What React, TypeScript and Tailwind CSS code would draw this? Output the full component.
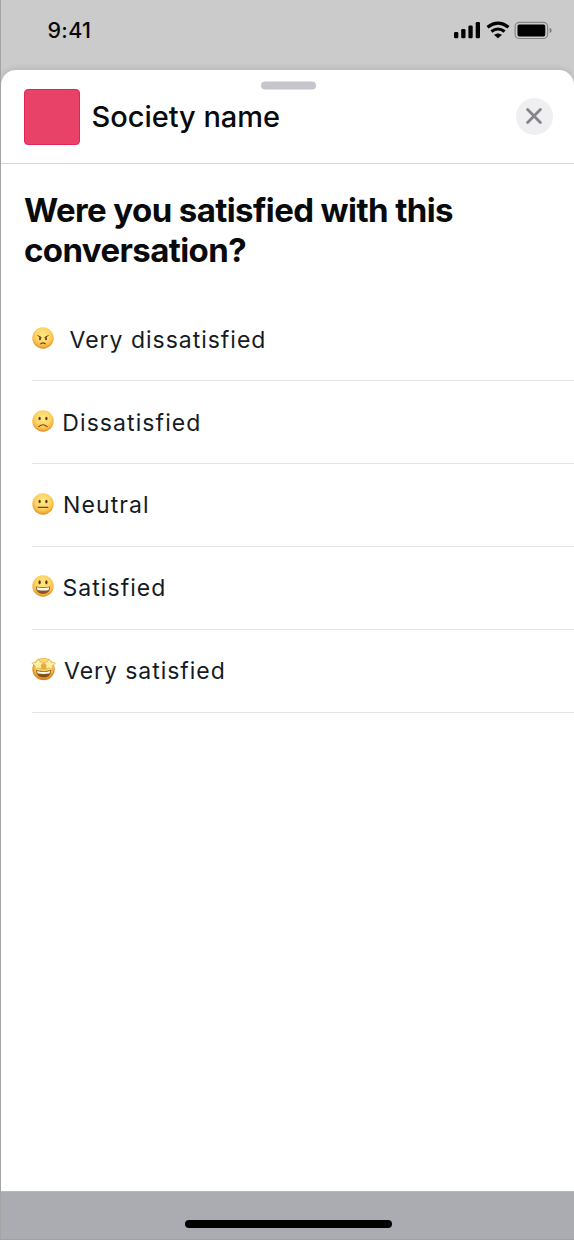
import React from "react";

type Mood = "angry" | "sad" | "neutral" | "happy" | "star";

const options: { mood: Mood; label: string; text: string }[] = [
  { mood: "angry", label: "Very dissatisfied", text: "mt-[1.6px] ml-[13.5px] tracking-[0.98px]" },
  { mood: "sad", label: "Dissatisfied", text: "mt-[1.6px] ml-[6.3px] tracking-[1.08px]" },
  { mood: "neutral", label: "Neutral", text: "ml-[7px] tracking-[1.1px]" },
  { mood: "happy", label: "Satisfied", text: "ml-[6.5px] tracking-[1.05px]" },
  { mood: "star", label: "Very satisfied", text: "ml-[8px] tracking-[0.95px]" },
];

function Face({ mood }: { mood: Mood }) {
  const fill = `url(#face-${mood})`;
  return (
    <svg viewBox="0 0 24 24" className="-mt-[3px] h-6 w-6 shrink-0 overflow-visible" aria-hidden="true">
      <defs>
        <radialGradient id={`face-${mood}`} cx="50%" cy="38%" r="62%">
          <stop offset="0" stopColor="#ffe982" />
          <stop offset="0.55" stopColor="#fdd568" />
          <stop offset="0.82" stopColor="#f6b540" />
          <stop offset="1" stopColor="#dc8720" />
        </radialGradient>
      </defs>
      <circle cx="11" cy="12" r="10.7" fill={fill} />
      {mood === "angry" && (
        <g fill="none" stroke="#6b3f1a" strokeLinecap="round">
          <path d="M5.8 9.6 9.2 11.4M16.2 9.6 12.8 11.4" strokeWidth="1" />
          <path d="M8 11.9v1.4M14 11.9v1.4" strokeWidth="1.9" />
          <path d="M8.8 17.8q2.2-1.8 4.4 0" strokeWidth="1.1" />
        </g>
      )}
      {(mood === "sad" || mood === "neutral" || mood === "happy") && (
        <g fill="#5f3515">
          <ellipse cx="7.6" cy={mood === "happy" ? 8.3 : 9.5} rx="1.15" ry={mood === "happy" ? 2.1 : 1.8} />
          <ellipse cx="14.4" cy={mood === "happy" ? 8.3 : 9.5} rx="1.15" ry={mood === "happy" ? 2.1 : 1.8} />
        </g>
      )}
      {mood === "sad" && (
        <path d="M6.8 17.6q4.2-3.8 8.4 0" fill="none" stroke="#75431a" strokeWidth="1.1" strokeLinecap="round" />
      )}
      {mood === "neutral" && (
        <path d="M6.2 15.3h9.6" stroke="#75431a" strokeWidth="1.2" strokeLinecap="round" />
      )}
      {mood === "happy" && (
        <>
          <path d="M3.8 12.5q7.2 1.5 14.4 0 -.2 7.4-7.2 7.4t-7.2-7.4z" fill="#8b5420" />
          <path d="M4.7 13.3q6.3 1.2 12.6 0 -.2 2.4-1.2 2.9 -5.1.8-10.2 0 -1-.6-1.2-2.9z" fill="#fffdf4" />
        </>
      )}
      {mood === "star" && (
        <>
          <circle cx="11.7" cy="12.2" r="11" fill="#d48a2a" />
          <circle cx="11.7" cy="11.6" r="10.3" fill="url(#face-star)" />
          <path d="M8.2 12.5 9.8 6.5h3.8l1.6 6z" fill="#e9a93a" />
          <g fill="#ffefa2" stroke="#dda23c" strokeWidth="0.6" strokeLinejoin="round">
            <path d="M6.4 1.7 8 4.9l3.4.6-2.3 2.9.7 3.6-3.5-1.2-3.2 1.8.1-3.7L-.2 6.1l4.2-.8z" />
            <path d="M17 1.7 15.4 4.9l-3.4.6 2.3 2.9-.7 3.6 3.5-1.2 3.2 1.8-.1-3.7 3.4-2.8-4.2-.8z" />
          </g>
          <path d="M4.1 13q7.6 2.2 15.2 0 -.3 7.4-7.6 7.4t-7.6-7.4z" fill="#84501c" />
          <path d="M5 13.9q6.7 1.8 13.4 0 -.3 2-1.3 2.7 -5.4.9-10.8 0 -1-.7-1.3-2.7z" fill="#fffdf0" />
        </>
      )}
    </svg>
  );
}

function StatusIcons() {
  return (
    <svg viewBox="0 0 100 20" className="h-5 w-[100px]" aria-hidden="true">
      <rect x="1" y="12" width="4.3" height="6.3" rx="1.2" />
      <rect x="8.2" y="9" width="4.3" height="9.3" rx="1.2" />
      <rect x="15.4" y="5.5" width="4.3" height="12.8" rx="1.2" />
      <rect x="22.7" y="2" width="4.3" height="16.3" rx="1.2" />
      <g fill="none" stroke="#000">
        <path d="M34.5 7.2q10.5-8 21 0" strokeWidth="3.2" />
        <path d="M38.4 11.5q6.6-5 13.2 0" strokeWidth="3.1" />
      </g>
      <path d="M45 18.1 41.5 14.9q3.5-2.4 7 0z" stroke="#000" strokeWidth=".6" strokeLinejoin="round" />
      <rect x="62.1" y="2.3" width="32.5" height="16.2" rx="4.3" fill="none" stroke="#868686" strokeWidth="1.2" />
      <rect x="64.5" y="4.4" width="27.8" height="12" rx="1.7" />
      <path d="M96.6 7.7q2 .9 2 2.7t-2 2.7z" fill="#777" />
    </svg>
  );
}

export default function App() {
  return (
    <main className="flex h-[1240px] w-[574px] flex-col overflow-hidden border-l border-[#a4a4a4] bg-[#cbcbcb] font-[Inter,sans-serif] text-[#080a0b]">
      <div className="flex h-[69.5px] shrink-0 items-start justify-between pl-[46.5px] pr-[21px]">
        <time className="mt-[17px] text-[21.5px] font-medium leading-[26px] tracking-[0.3px]">9:41</time>
        <div className="mt-5">
          <StatusIcons />
        </div>
      </div>
      <section className="flex flex-1 flex-col rounded-t-[15px] bg-white shadow-[0_-1px_6px_rgba(0,0,0,0.12)]">
        <div className="flex h-[16.5px] shrink-0 items-end justify-center pl-[1px] pt-3">
          <div className="h-2 w-[55px] shrink-0 translate-y-[3.5px] rounded-full bg-[#c6c5cb]" />
        </div>
        <header className="flex h-[77.5px] shrink-0 items-start border-b border-[#d7d7d7] pl-[23px] pr-[21px] pt-[2.5px]">
          <div className="h-[56.5px] w-[56.4px] rounded-[4px] border border-[#e52259] bg-[#e94268]" />
          <h2 className="ml-[11.1px] mt-[10px] text-[29px] font-medium leading-[36px] tracking-[-0.03px]">Society name</h2>
          <button aria-label="Close" className="ml-auto mt-[9px] flex h-[37px] w-[37px] items-center justify-center rounded-full bg-[#efeef1]">
            <svg viewBox="0 0 16 16" className="-ml-px -mt-px h-4 w-4" aria-hidden="true">
              <path d="M1.6 1.6 14.4 14.4M14.4 1.6 1.6 14.4" stroke="#858589" strokeWidth="2.8" strokeLinecap="round" />
            </svg>
          </button>
        </header>
        <h1 className="mt-[26px] whitespace-nowrap pl-[23px] text-[33px] font-bold leading-[40px] tracking-[-0.6px]">
          Were you satisfied with this
          <br />
          conversation?
        </h1>
        <div className="ml-[31px] mt-[28.8px]">
          {options.map((option) => (
            <button key={option.mood} className="flex h-[82.9px] w-full items-center border-b border-[#e5e5e5] text-left">
              <Face mood={option.mood} />
              <span className={`${option.text} whitespace-nowrap text-[23px] leading-[28px] text-[#151b24]`}>{option.label}</span>
            </button>
          ))}
        </div>
      </section>
      <footer className="flex h-[49px] shrink-0 items-end justify-center border-b border-t border-b-[#a0a0a5] border-t-[#b9b9bf] bg-[#abacb1] pb-[11px] pl-[1px]">
        <div className="h-2 w-[207px] rounded-full bg-black" />
      </footer>
    </main>
  );
}
